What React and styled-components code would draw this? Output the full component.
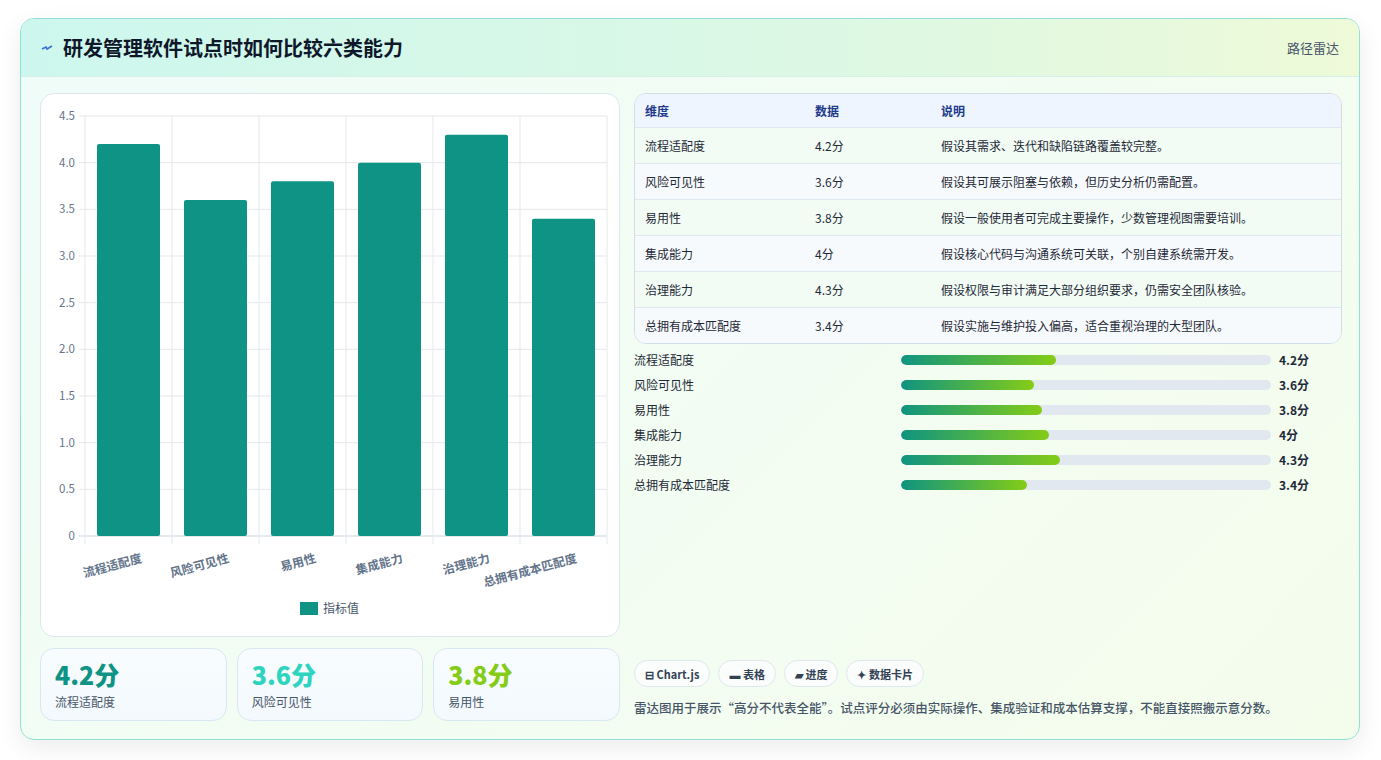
import React from 'react';
import styled, { createGlobalStyle } from 'styled-components';

const Global = createGlobalStyle`
  body { margin: 0; background: #fff; font-family: "Noto Sans CJK SC", "Noto Sans", sans-serif; }
`;

const data = [
  { name: '流程适配度', v: 4.2, note: '假设其需求、迭代和缺陷链路覆盖较完整。' },
  { name: '风险可见性', v: 3.6, note: '假设其可展示阻塞与依赖，但历史分析仍需配置。' },
  { name: '易用性', v: 3.8, note: '假设一般使用者可完成主要操作，少数管理视图需要培训。' },
  { name: '集成能力', v: 4, note: '假设核心代码与沟通系统可关联，个别自建系统需开发。' },
  { name: '治理能力', v: 4.3, note: '假设权限与审计满足大部分组织要求，仍需安全团队核验。' },
  { name: '总拥有成本匹配度', v: 3.4, note: '假设实施与维护投入偏高，适合重视治理的大型团队。' },
];

const Page = styled.div`
  padding: 18px 20px 20px 20px;
`;
const Card = styled.div`
  width: 1340px;
  height: 722px;
  box-sizing: border-box;
  border: 1px solid #8fe0d6;
  border-radius: 14px;
  overflow: hidden;
  background: linear-gradient(135deg, #f0fcf9 0%, #f4fdec 100%);
  box-shadow: 0 8px 24px rgba(0,0,0,0.08);
  display: flex;
  flex-direction: column;
`;
const Header = styled.div`
  height: 57px;
  flex-shrink: 0;
  display: flex;
  align-items: center;
  justify-content: space-between;
  padding: 0 20px;
  background: linear-gradient(90deg, #cdf7ee 0%, #dcf8e4 60%, #eefad8 100%);
  border-bottom: 1px solid #d6efe8;
`;
const Title = styled.h1`
  margin: 0;
  font-size: 20px;
  font-weight: 700;
  color: #0f172a;
  display: flex;
  align-items: center;
  gap: 10px;
`;
const HeadTag = styled.span`
  font-size: 13px;
  color: #475569;
`;
const Body = styled.div`
  flex: 1;
  display: grid;
  grid-template-columns: 580px 708px;
  gap: 14px;
  padding: 16px 19px 18px 19px;
`;
const Col = styled.div`
  display: flex;
  flex-direction: column;
  gap: 11px;
`;
const ChartBox = styled.div`
  height: 544px;
  box-sizing: border-box;
  background: #fff;
  border: 1px solid #dbe7ef;
  border-radius: 14px;
`;
const Stats = styled.div`
  display: grid;
  grid-template-columns: repeat(3, 1fr);
  gap: 10px;
`;
const Stat = styled.div`
  height: 73px;
  box-sizing: border-box;
  border: 1px solid #d8e8f0;
  border-radius: 14px;
  background: linear-gradient(180deg, #f8fcfe, #f3f9fd);
  padding: 10px 14px;
`;
const StatNum = styled.div`
  font-size: 25px;
  font-weight: 800;
  line-height: 30px;
  color: ${p => p.$c};
`;
const StatLbl = styled.div`
  font-size: 12px;
  color: #475569;
  margin-top: 4px;
`;
const Table = styled.div`
  border: 1px solid #cfdfe8;
  border-radius: 12px;
  overflow: hidden;
  background: #fff;
`;
const Row = styled.div`
  display: grid;
  grid-template-columns: 170px 126px 1fr;
  height: ${p => (p.$head ? 33 : 35)}px;
  align-items: center;
  padding: 0 10px;
  font-size: 12px;
  color: ${p => (p.$head ? '#1e3a8a' : '#1f2937')};
  font-weight: ${p => (p.$head ? 600 : 400)};
  background: ${p => (p.$head ? '#eef5fe' : p.$odd ? '#f7fafc' : '#f2fcf5')};
  border-top: ${p => (p.$head ? 'none' : '1px solid #dfe8ee')};
`;
const Bars = styled.div`
  display: flex;
  flex-direction: column;
  gap: 9px;
  margin-top: 7px;
`;
const BarRow = styled.div`
  display: grid;
  grid-template-columns: 267px 370px 1fr;
  align-items: center;
  height: 16px;
  font-size: 12px;
  color: #1f2937;
`;
const Track = styled.div`
  height: 10px;
  border-radius: 5px;
  background: #e2e8f0;
  overflow: hidden;
`;
const Fill = styled.div`
  height: 100%;
  border-radius: 5px;
  background: linear-gradient(90deg, #0f9480, #84cc16);
`;
const BarVal = styled.span`
  padding-left: 8px;
  font-weight: 700;
  color: #1e293b;
`;
const Spacer = styled.div` flex: 1; `;
const Chips = styled.div`
  display: flex;
  gap: 8px;
`;
const Chip = styled.span`
  height: 27px;
  box-sizing: border-box;
  padding: 0 10px;
  display: inline-flex;
  align-items: center;
  gap: 4px;
  border: 1px solid #dfe7ee;
  border-radius: 14px;
  background: #fbfdfc;
  font-size: 11px;
  font-weight: 600;
  color: #334155;
`;
const Note = styled.p`
  margin: 11px 0 4px;
  font-size: 12.5px;
  color: #475569;
  font-weight: 500;
`;

const Chart = () => {
  const x0 = 44, x1 = 566, yT = 22, yB = 442;
  const h = yB - yT;
  const step = (x1 - x0) / 6;
  const ticks = [0, 0.5, 1, 1.5, 2, 2.5, 3, 3.5, 4, 4.5];
  return (
    <svg width="578" height="542" style={{ display: 'block' }} fontFamily="'Noto Sans CJK SC', sans-serif">
      {ticks.map(t => {
        const y = yB - (t / 4.5) * h;
        return (
          <g key={t}>
            <line x1={x0 - 6} x2={x1} y1={y} y2={y} stroke={t === 0 ? '#cbd5e1' : '#e5e7eb'} />
            <text x={x0 - 10} y={y + 4} fontSize="11.5" fill="#64748b" textAnchor="end">{t === 0 ? '0' : t.toFixed(1)}</text>
          </g>
        );
      })}
      {Array.from({ length: 7 }).map((_, i) => (
        <line key={i} x1={x0 + i * step} x2={x0 + i * step} y1={yT} y2={yB + 8} stroke="#e5e7eb" />
      ))}
      {data.map((d, i) => {
        const bh = (d.v / 4.5) * h;
        const cx = x0 + step * i + step / 2;
        return (
          <g key={d.name}>
            <rect x={cx - 31.5} y={yB - bh} width="63" height={bh} fill="#0e9384" rx="2" />
            <text x={cx + 14} y={yB + 26} fontSize="12" fontWeight="600" fill="#64748b" textAnchor="end"
              transform={`rotate(-15 ${cx + 14} ${yB + 26})`}>{d.name}</text>
          </g>
        );
      })}
      <rect x="259" y="508" width="18" height="13" fill="#0e9384" />
      <text x="282" y="519" fontSize="12" fill="#475569">指标值</text>
    </svg>
  );
};

export default function App() {
  return (
    <Page>
      <Global />
      <Card>
        <Header>
          <Title>
            <svg width="12" height="10" viewBox="0 0 12 10"><path d="M1 6 L5 4 L6 6 L11 3" stroke="#3b6fd8" strokeWidth="1.6" fill="none" /></svg>
            研发管理软件试点时如何比较六类能力
          </Title>
          <HeadTag>路径雷达</HeadTag>
        </Header>
        <Body>
          <Col>
            <ChartBox><Chart /></ChartBox>
            <Stats>
              <Stat><StatNum $c="#0e9384">4.2分</StatNum><StatLbl>流程适配度</StatLbl></Stat>
              <Stat><StatNum $c="#2dd4bf">3.6分</StatNum><StatLbl>风险可见性</StatLbl></Stat>
              <Stat><StatNum $c="#84cc16">3.8分</StatNum><StatLbl>易用性</StatLbl></Stat>
            </Stats>
          </Col>
          <Col style={{ gap: 0 }}>
            <Table>
              <Row $head><span>维度</span><span>数据</span><span>说明</span></Row>
              {data.map((d, i) => (
                <Row key={d.name} $odd={i % 2 === 1}><span>{d.name}</span><span>{d.v}分</span><span>{d.note}</span></Row>
              ))}
            </Table>
            <Bars>
              {data.map(d => (
                <BarRow key={d.name}>
                  <span>{d.name}</span>
                  <Track><Fill style={{ width: `${d.v * 10}%` }} /></Track>
                  <BarVal>{d.v}分</BarVal>
                </BarRow>
              ))}
            </Bars>
            <Spacer />
            <Chips>
              <Chip>⊟ Chart.js</Chip>
              <Chip>▬ 表格</Chip>
              <Chip>▰ 进度</Chip>
              <Chip>✦ 数据卡片</Chip>
            </Chips>
            <Note>雷达图用于展示“高分不代表全能”。试点评分必须由实际操作、集成验证和成本估算支撑，不能直接照搬示意分数。</Note>
          </Col>
        </Body>
      </Card>
    </Page>
  );
}
